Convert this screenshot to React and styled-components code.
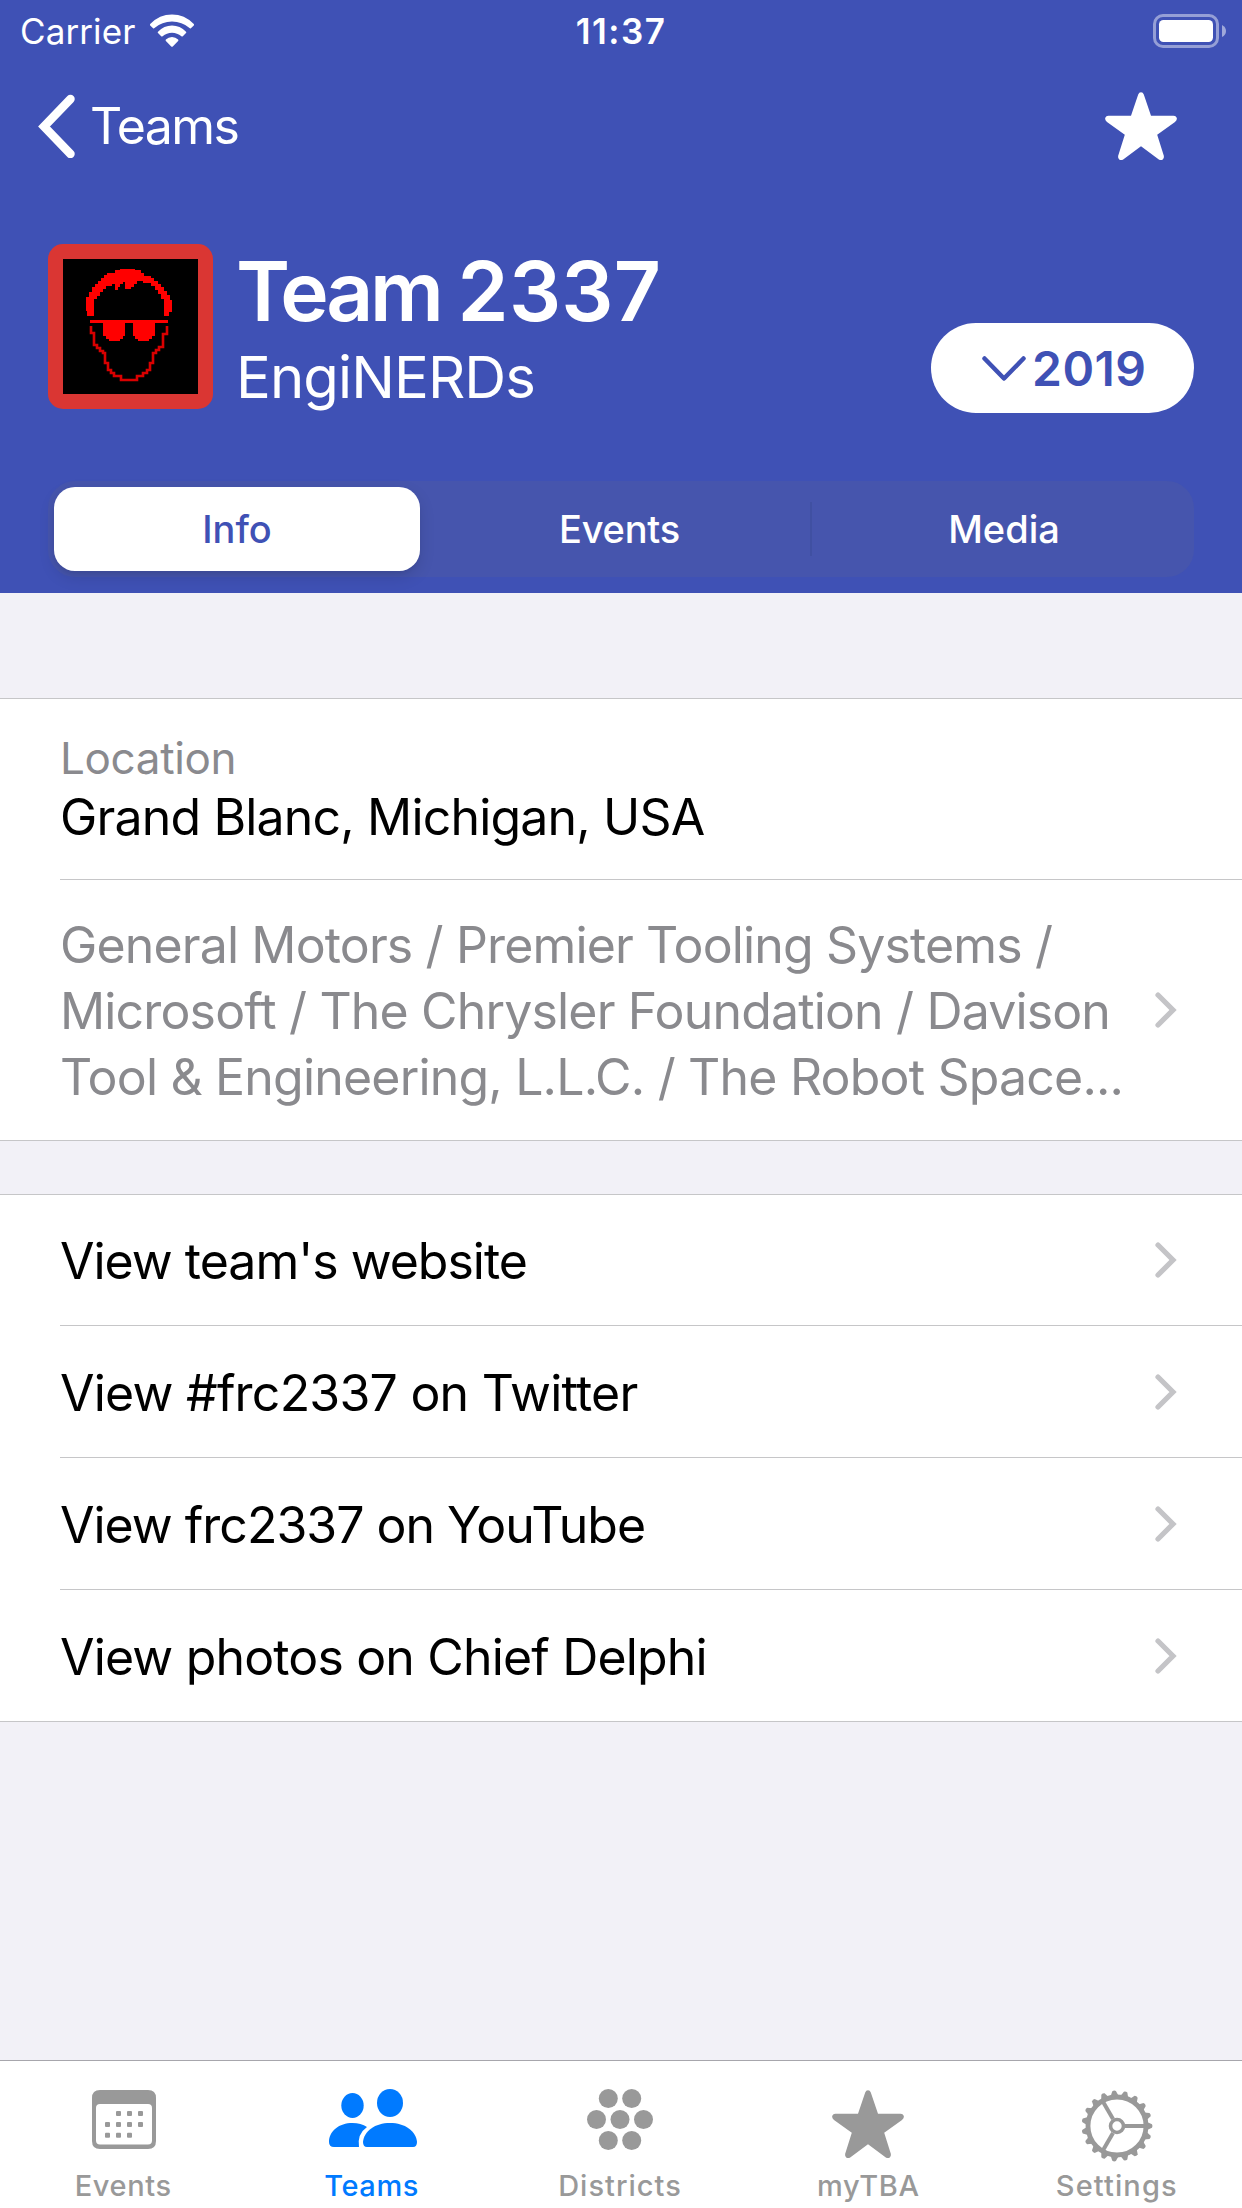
import React from "react";
import styled, { createGlobalStyle } from "styled-components";

const Global = createGlobalStyle`
  body { margin: 0; }
  * { box-sizing: border-box; }
`;

const Screen = styled.div`
  width: 1242px;
  height: 2208px;
  display: flex;
  flex-direction: column;
  background: #f2f1f7;
  font-family: Inter, "Liberation Sans", sans-serif;
  color: #000;
  overflow: hidden;
`;

const Header = styled.header`
  height: 593px;
  background: #3f51b5;
  color: #fff;
  display: flex;
  flex-direction: column;
`;

const StatusBar = styled.div`
  height: 60px;
  display: grid;
  grid-template-columns: 1fr auto 1fr;
  align-items: center;
  padding: 2px 16px 0 20px;
`;

const Label = styled.span`
  font-size: ${(p) => p.$size}px;
  font-weight: ${(p) => p.$weight || 400};
  letter-spacing: ${(p) => p.$track || 0}px;
  line-height: ${(p) => p.$line || p.$size * 1.2}px;
  color: ${(p) => p.$color || "inherit"};
  padding-top: ${(p) => p.$drop || 0}px;
  white-space: nowrap;
`;

const Tight = styled.span`
  letter-spacing: -3.4px;
`;

const Clock = styled(Label)`
  margin-left: -4px;
`;

const Carrier = styled.div`
  display: flex;
  align-items: center;
  gap: 14px;
`;

const BatteryBox = styled.div`
  display: flex;
  justify-content: flex-end;
`;

const NavBar = styled.nav`
  height: 132px;
  display: flex;
  align-items: center;
  justify-content: space-between;
  padding: 0 65px 0 38px;
`;

const Back = styled.div`
  display: flex;
  align-items: center;
  gap: 15px;
`;

const Profile = styled.div`
  display: flex;
  height: 165px;
  margin-top: 52px;
  padding: 0 48px;
`;

const Avatar = styled.div`
  width: 165px;
  height: 165px;
  border: 15px solid #da3633;
  border-radius: 15px;
  background: #da3633;
  display: flex;
`;

const Names = styled.div`
  flex: 1;
  display: flex;
  flex-direction: column;
  padding: 6px 0 0 23px;
`;

const YearButton = styled.div`
  width: 263px;
  height: 90px;
  margin-top: 79px;
  border-radius: 45px;
  background: #fff;
  color: #3f51b5;
  display: flex;
  align-items: center;
  padding-left: 51px;
  gap: 6px;
`;

const Segments = styled.div`
  height: 96px;
  margin: 72px 48px 0;
  padding: 6px;
  border-radius: 27px;
  background: #4655ad;
  display: flex;
  align-items: stretch;
`;

const Segment = styled.div`
  flex: 0 0 ${(p) => p.$width}px;
  display: flex;
  align-items: center;
  justify-content: center;
  padding-left: ${(p) => p.$inset || 0}px;
  border-radius: 21px;
  ${(p) =>
    p.$active &&
    "background: #fff; color: #3f51b5; box-shadow: 0 6px 16px rgba(0,0,0,.12), 0 3px 3px rgba(0,0,0,.04);"}
`;

const Divider = styled.div`
  flex: 0 0 2px;
  height: 54px;
  margin-left: -2px;
  align-self: center;
  background: #4050a2;
`;

const Group = styled.section`
  margin-top: ${(p) => p.$gap}px;
  background: #fff;
  border-top: 1px solid #c6c6c8;
  border-bottom: 1px solid #c6c6c8;
`;

const Row = styled.div`
  height: ${(p) => p.$height}px;
  margin-left: 60px;
  padding-right: 65px;
  display: flex;
  align-items: center;
  justify-content: space-between;
  & + & {
    border-top: 1px solid #c6c6c8;
  }
`;

const Stack = styled.div`
  display: flex;
  flex-direction: column;
  padding-top: ${(p) => p.$top || 0}px;
  padding-bottom: ${(p) => p.$bottom || 0}px;
`;

const Spacer = styled.div`
  flex: 1;
`;

const TabBar = styled.nav`
  height: 148px;
  border-top: 1px solid #a7a6ac;
  background: #fff;
  display: grid;
  grid-template-columns: repeat(5, 1fr);
`;

const Tab = styled.div`
  display: flex;
  flex-direction: column;
  align-items: center;
  color: ${(p) => (p.$active ? "#007aff" : "#999")};
`;

const TabIcon = styled.div`
  height: 108px;
  padding: ${(p) => p.$top}px ${(p) => p.$right}px 0 0;
`;

const TabLabel = styled(Label)`
  padding-right: 2px;
`;

const Svg = styled.svg`
  display: block;
  flex: none;
`;

const Wifi = () => (
  <Svg width="46" height="34" viewBox="0 0 46 34" fill="#fff">
    <path d="M1.2 9.900Q10.500 .5 23 .5Q35.500 .5 44.800 9.900Q45.400 10.700 44.800 11.400L41.900 14.200Q41.200 14.700 40.500 14.100Q33 7.600 23 7.600Q13 7.600 5.500 14.100Q4.800 14.700 4.100 14.200L1.200 11.400Q.6 10.700 1.200 9.900Z" />
    <path d="M9 17.700Q15 11.600 23 11.600Q31 11.600 37 17.700Q37.700 18.400 37 19.100L33.800 22.200Q33.100 22.700 32.400 22.200Q28.300 18.700 23 18.700Q17.700 18.700 13.600 22.200Q12.900 22.700 12.200 22.200L9 19.100Q8.300 18.400 9 17.700Z" />
    <path d="M16.900 25.600Q19.400 23 23 23Q26.600 23 29.100 25.600Q29.800 26.300 29.100 27L23.800 32.400Q23 33.200 22.200 32.400L16.900 27Q16.200 26.300 16.900 25.600Z" />
  </Svg>
);

const Battery = () => (
  <Svg width="73" height="34" viewBox="0 0 73 34">
    <rect x="1.500" y="1.500" width="63" height="31" rx="8.500" fill="none" stroke="#fff" strokeOpacity=".45" strokeWidth="3" />
    <rect x="6" y="6" width="54" height="22" rx="4.500" fill="#fff" />
    <path d="M69 11Q73 13 73 17T69 23Z" fill="#fff" fillOpacity=".5" />
  </Svg>
);

const Star = () => (
  <Svg width="72" height="69" viewBox="0 0 72 69" fill="currentColor">
    <path d="M33.200 2.500Q34 .3 36 .3T38.800 2.500L46 23.700H68.500Q71.500 23.900 71.900 26.500Q72 28.300 70 30L52.200 42.700L58.900 64Q59.300 66.500 57.500 67.700Q55.700 68.600 53.800 67.400L36 54.300L18.200 67.400Q16.300 68.600 14.500 67.700Q12.700 66.500 13.100 64L19.800 42.700L2 30Q0 28.300.1 26.500Q.5 23.900 3.500 23.700H26Z" />
  </Svg>
);

const Face = () => (
  <Svg width="135" height="135" viewBox="0 0 135 135" fill="#f00">
    <rect width="135" height="135" fill="#000" />
    <path d="M24 57V52H23V38H26V33H29V28H32V25H35V22H38V19H41V16H44V14H52V11H57V10H72V11H78V14H81V17H88V19H91V22H95V25H98V28H101V32H104V36H107V41H109V53H106V57H101V40H98V35H95V31H92V27H88V24H80V22H74V25H71V28H68V30H62V23H60V25H57V28H55V31H52V25H49V27H43V30H40V33H37V37H34V40H31V57Z" />
    <path d="M27 61H105V64H92V77H89V80H86V82H75V80H72V77H70V64H62V77H60V80H57V82H46V80H43V77H40V64H27Z" />
    <path
      d="M28 67V74H31V86H34V89H37V92H40V94H42V104H45V111H48V114H51V117H58V121H74V117H80V114H84V111H87V104H90V94H93V91H96V88H100V75H104V67"
      fill="none"
      stroke="#d90000"
      strokeWidth="2.600"
    />
  </Svg>
);

const Chevron = () => (
  <Svg width="22" height="36" viewBox="0 0 22 36" fill="none" stroke="#c4c4c7" strokeWidth="5.200" strokeLinecap="round" strokeLinejoin="miter">
    <path d="M3 3L18 18L3 33" />
  </Svg>
);

const CalendarIcon = () => (
  <Svg width="64" height="65" viewBox="0 0 64 65" fill="currentColor">
    <path fillRule="evenodd" d="M8 5H56Q64 5 64 13V56Q64 64 56 64H8Q0 64 0 56V13Q0 5 8 5ZM8 19Q4 19 4 23V55.500Q4 59.500 8 59.500H56Q60 59.500 60 55.500V23Q60 19 56 19Z" />
    {[[24, 26], [35, 26], [46, 26], [13, 37], [24, 37], [35, 37], [46, 37], [13, 47.700], [24, 47.700], [35, 47.700]].map(([x, y]) => (
      <rect key={`${x}-${y}`} x={x} y={y} width="5" height="5" rx="1" />
    ))}
  </Svg>
);

const PeopleIcon = () => (
  <Svg width="88" height="63" viewBox="0 0 88 63" fill="currentColor">
    <ellipse cx="23.500" cy="20.500" rx="11.200" ry="12.500" />
    <ellipse cx="61" cy="18" rx="13" ry="14" />
    <path d="M5 62Q0 62 0 57C0 46 10 38 23.500 38Q32 38 38 42Q28 49 30 62Z" />
    <path d="M38 62Q34 62 34 57C35 46 46 38 61 38S87 46 88 57Q88 62 84 62Z" />
  </Svg>
);

const DistrictsIcon = () => (
  <Svg width="66" height="65" viewBox="0 0 66 65" fill="currentColor">
    {[[21.300, 13.500], [44.700, 13.500], [9.500, 34.500], [33, 34.500], [56.500, 34.500], [21.300, 55.500], [44.700, 55.500]].map(([x, y]) => (
      <circle key={`${x}-${y}`} cx={x} cy={y} r="9.500" />
    ))}
  </Svg>
);

const GearIcon = () => (
  <Svg width="72" height="78" viewBox="-36 -41 72 78" fill="none" stroke="currentColor">
    <circle r="29" strokeWidth="4.800" />
    <circle r="6.500" strokeWidth="3.600" />
    {[0, 120, 240].map((a) => (
      <path key={a} d="M8 0H28" strokeWidth="4" transform={`rotate(${a})`} />
    ))}
    {Array.from({ length: 19 }, (_, i) => (
      <path key={i} d="M30 -4L35 -1.800Q36 0 35 1.800L30 4Z" fill="currentColor" stroke="none" transform={`rotate(${(i * 360) / 19})`} />
    ))}
  </Svg>
);

const links = [
  ["View team's website", 130, -1],
  ["View #frc2337 on Twitter", 132, -0.77],
  ["View frc2337 on YouTube", 132, -1],
  ["View photos on Chief Delphi", 132, -0.84],
];

const sponsors = [
  ["General Motors / Premier Tooling Systems /", -0.86],
  ["Microsoft / The Chrysler Foundation / Davison", -0.84],
  ["Tool & Engineering, L.L.C. / The Robot Space...", -0.81],
];

const tabs = [
  ["Events", CalendarIcon, 24, 0, 0.6],
  ["Teams", PeopleIcon, 24, 0, 0.6],
  ["Districts", DistrictsIcon, 24, 2, 1],
  ["myTBA", Star, 29, 2, 0.6],
  ["Settings", GearIcon, 24, 2, 1.1],
];

export default function App() {
  return (
    <Screen>
      <Global />
      <Header>
        <StatusBar>
          <Carrier>
            <Label $size={35} $track={0.1}>Carrier</Label>
            <Wifi />
          </Carrier>
          <Clock $size={35} $weight={600} $track={1.5}>11:37</Clock>
          <BatteryBox><Battery /></BatteryBox>
        </StatusBar>
        <NavBar>
          <Back>
            <Svg width="37" height="64" viewBox="0 0 37 64" fill="none" stroke="#fff" strokeWidth="8.500" strokeLinecap="round">
              <path d="M32.500 5L6 32.500L32.500 60" />
            </Svg>
            <Label $size={50} $track={-1.6}>Teams</Label>
          </Back>
          <Star />
        </NavBar>
        <Profile>
          <Avatar><Face /></Avatar>
          <Names>
            <Label $size={82} $weight={600} $line={84} $track={0.2}><Tight>Team </Tight>2337</Label>
            <Label $size={58} $line={84} $track={-0.9} $drop={1}>EngiNERDs</Label>
          </Names>
          <YearButton>
            <Svg width="44" height="25" viewBox="0 0 44 25" fill="none" stroke="currentColor" strokeWidth="4.500" strokeLinecap="round" strokeLinejoin="round">
              <path d="M2.500 2.500L22 22.500L41.500 2.500" />
            </Svg>
            <Label $size={48} $weight={580} $track={0.5} $drop={1}>2019</Label>
          </YearButton>
        </Profile>
        <Segments>
          <Segment $active $width={366}><Label $size={38} $weight={550} $drop={2}>Info</Label></Segment>
          <Segment $width={392} $inset={7}><Label $size={38} $weight={450} $drop={2} $track={-0.2}>Events</Label></Segment>
          <Divider />
          <Segment $width={376} $inset={8}><Label $size={38} $weight={450} $drop={2}>Media</Label></Segment>
        </Segments>
      </Header>
      <Group $gap={105}>
        <Row $height={180}>
          <Stack $bottom={2}>
            <Label $size={44} $line={58} $track={-0.35} $color="#8a8a8e">Location</Label>
            <Label $size={50} $line={60} $track={-0.83}>Grand Blanc, Michigan, USA</Label>
          </Stack>
        </Row>
        <Row $height={261}>
          <Stack $top={2}>
            {sponsors.map(([line, track]) => (
              <Label key={line} $size={50} $line={66} $track={track} $color="#8a8a8e">{line}</Label>
            ))}
          </Stack>
          <Chevron />
        </Row>
      </Group>
      <Group $gap={53}>
        {links.map(([text, height, track]) => (
          <Row key={text} $height={height}>
            <Label $size={50} $track={track} $drop={2}>{text}</Label>
            <Chevron />
          </Row>
        ))}
      </Group>
      <Spacer />
      <TabBar>
        {tabs.map(([name, Icon, top, right, track]) => (
          <Tab key={name} $active={name === "Teams"}>
            <TabIcon $top={top} $right={right}><Icon /></TabIcon>
            <TabLabel $size={29} $weight={500} $line={34} $track={track}>{name}</TabLabel>
          </Tab>
        ))}
      </TabBar>
    </Screen>
  );
}
